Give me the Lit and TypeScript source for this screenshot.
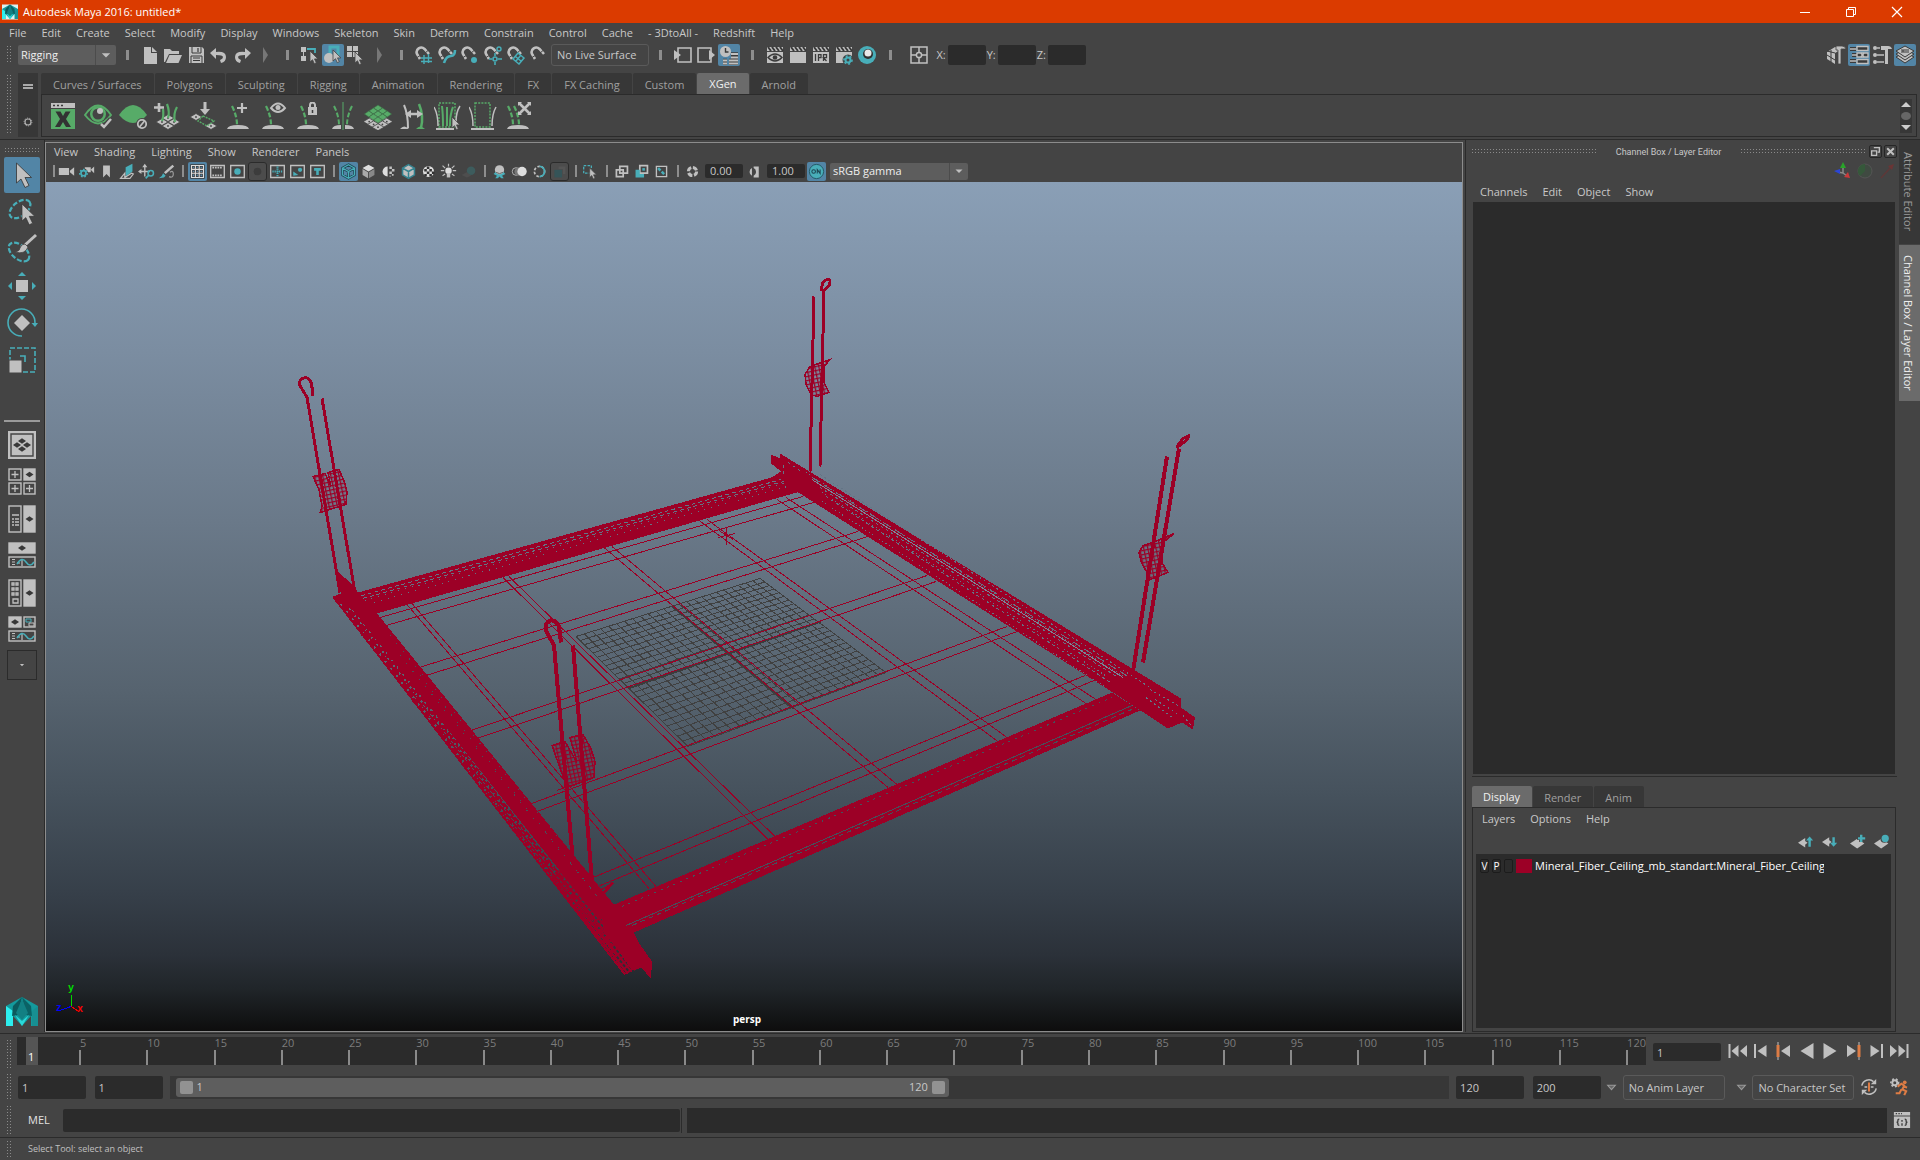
import { LitElement, html, svg, css } from "lit";
import { customElement, property, state } from "lit/decorators.js";
import { classMap } from "lit/directives/class-map.js";

const G = "#c0c0c0";
const D = "#3a3a3a";
const T = "#48aeb9";
const N = "#57ab68";
const O = "#dd7c45";
const RED = "#9c0026";

const clap = svg`<path d="M2 2h16v4H2z" fill="${G}"/><path d="M3 2l3 4M7 2l3 4M11 2l3 4M15 2l3 4" stroke="${D}" stroke-width="2"/><path d="M2 7h16v11H2z" fill="${G}"/>`;
const magnet = svg`<path d="M6 14L3 9A4.600 4.600 0 0 1 10.500 4L15 9" fill="none" stroke="${G}" stroke-width="2.600"/><path d="M3 12.500l4-2.500M10.500 8.500L14 5.500" stroke="#444" stroke-width="1"/>`;
const cursor = (x: number, y: number) =>
  svg`<path transform="translate(${x} ${y})" d="M0 0v11l2.500-2.300 1.800 4 2-1-1.800-3.800H8z" fill="${G}" stroke="#444" stroke-width=".8"/>`;
const frame = svg`<path d="M2 3h16v14H2z" fill="none" stroke="${G}" stroke-width="1.600"/>`;
const clump = (x: number) =>
  svg`<path d="M${x} 4q5 10 5 19" fill="none" stroke="${N}" stroke-width="2.200" stroke-dasharray="5 2"/>`;
const mound = svg`<path d="M3 27q1-4 11-4t11 4z" fill="${G}"/>`;
const gear = (x: number, y: number, r: number, c: string) =>
  svg`<circle cx=${x} cy=${y} r=${r} fill="none" stroke=${c} stroke-width="2"/><circle cx=${x} cy=${y} r=${r + 1.5} fill="none" stroke=${c} stroke-width="1.600" stroke-dasharray="2 2"/>`;
const tile = (x: number, y: number, c: string) =>
  svg`<path d="M${x} ${y - 3.5}l6 3.500-6 3.500-6-3.500z" fill=${c} stroke="#444" stroke-width=".8"/><circle cx=${x} cy=${y} r=".9" fill="#444"/>`;

const ICONS: Record<string, unknown> = {
  file: svg`<path d="M4 2h7v6h6v11H4z" fill="${G}"/><path d="M12 2l5 5h-5z" fill="${G}"/>`,
  open: svg`<path d="M1 17V4h6l2 2h7v3H6L2 17z" fill="${G}"/><path d="M6.500 10H19l-3.500 8H3z" fill="${G}"/>`,
  save: svg`<path d="M3 2h13l2 2v14H3z" fill="${G}"/><path d="M6 2v6h9V2M5 18v-7h11v7" fill="none" stroke="${D}"/><path d="M7 13h7M7 15.500h7M12 3v4" stroke="${D}" stroke-width="1.200"/>`,
  undo: svg`<path d="M1 8l6-5v4q10-1 10 5 0 5-5 6l-1-3q3-1 3-3 0-2-7-2v4z" fill="${G}"/>`,
  redo: svg`<path d="M19 8l-6-5v4Q3 6 3 12q0 5 5 6l1-3q-3-1-3-3 0-2 7-2v4z" fill="${G}"/>`,
  selHier: svg`<path d="M1 2h5v5H1zM1 11h5v5H1z" fill="${G}"/><path d="M3.500 7v4" stroke="${G}"/><path d="M7 4h8v4" fill="none" stroke="${T}" stroke-width="1.800"/>${cursor(10, 6)}`,
  selObj: svg`<path d="M7 2h8v9H7z" fill="none" stroke="${T}" stroke-width="3"/><circle cx="6" cy="13" r="5" fill="${G}"/>${cursor(10, 5)}`,
  selComp: svg`<path d="M1 1h5v5H1zM7 1h5v5H7zM1 7h5v5H1zM7 7h5v5H7z" fill="${G}"/>${cursor(9, 7)}`,
  magGrid: svg`${magnet}<path d="M10 10v9M14.500 9v9M7 13h11M7 16.500h11" stroke="${T}" stroke-width="1.400"/>`,
  magCurve: svg`${magnet}<path d="M7 18q2-7 7-7 4 0 4-6" fill="none" stroke="${T}" stroke-width="2.600"/>`,
  magPoint: svg`${magnet}<circle cx="14" cy="15" r="3" fill="${T}"/>`,
  magCenter: svg`${magnet}<circle cx="16" cy="4" r="2" fill="none" stroke="${T}" stroke-width="1.400"/><circle cx="12" cy="14" r="2" fill="none" stroke="${T}" stroke-width="1.600"/><path d="M12 8v3M12 17v3M6 14h3M15 14h4" stroke="${T}" stroke-width="1.600"/>`,
  magPlane: svg`${magnet}<path d="M12 8l6 5-5 6-6-5zM9.500 11.500l6 5M15 10l-5 6" fill="none" stroke="${T}" stroke-width="1.500"/>`,
  magLive: magnet,
  inBox: svg`<path d="M5 3h13v14H5z" fill="none" stroke="${G}" stroke-width="1.600"/><path d="M1 5l7 5-7 5z" fill="${G}"/>`,
  outBox: svg`<path d="M2 3h13v14H2z" fill="none" stroke="${G}" stroke-width="1.600"/><path d="M13 5l6 5-6 5z" fill="${G}"/>`,
  history: svg`<circle cx="6.500" cy="6.500" r="5.500" fill="${G}"/><path d="M6.500 3v4h3" fill="none" stroke="${D}" stroke-width="1.400"/><path d="M12 9h7M12 12.500h7M4 15.500h4M4 18.500h4M10 15.500h9M10 18.500h9" stroke="${D}" stroke-width="3.400"/><path d="M12 9h7M12 12.500h7M4 15.500h4M4 18.500h4M10 15.500h9M10 18.500h9" stroke="${G}" stroke-width="1.800"/>`,
  rendView: svg`${clap}<path d="M3 12.500q7-7 14 0-7 7-14 0z" fill="none" stroke="${D}" stroke-width="1.400"/><circle cx="10" cy="12.500" r="2.300" fill="${D}"/>`,
  rend: clap,
  ipr: svg`${clap}<path d="M4.500 9v7M7.500 16V9.700h2.500v3H7.500M12.500 16V9.700h3v3h-3l3 3.300" fill="none" stroke="${D}" stroke-width="1.300"/>`,
  rendSet: svg`${clap}<circle cx="14" cy="15" r="5.500" fill="#444"/>${gear(14, 15, 2.5, T)}`,
  hyper: svg`<circle cx="10" cy="10" r="9" fill="${T}"/><circle cx="11" cy="9" r="5" fill="#303030"/><circle cx="11" cy="8" r="3.500" fill="#e8e8e8"/>`,
  target: svg`<path d="M2 2h16v16H2zM10 2v5M10 13v5M2 10h5M13 10h5" fill="none" stroke="${G}" stroke-width="1.500"/><circle cx="10" cy="10" r="2.600" fill="none" stroke="${G}" stroke-width="1.500"/>`,
  modelKit: svg`<path d="M1 7l8-5 7 2-7 4v11l-8-5z" fill="${G}"/><path d="M1 10l8 5M5 5v12M9 8l-8-2" stroke="${D}"/><path d="M10 1h6q3 0 4 3h-5v15h-3V5h-2z" fill="${G}" stroke="#444" stroke-width=".8"/>`,
  attr: svg`<path d="M1 4h6M3 10h5M1 16h6" stroke="${D}" stroke-width="4"/><path d="M1 4h6M3 10h5M1 16h6" stroke="${G}" stroke-width="1.600"/><path d="M8 1.500h11v4H8zM8 8h11v4H8zM8 14.500h11v4H8z" fill="${D}" stroke="${G}" stroke-width="1.400"/><path d="M12 8l3 4M15 8l-3 4" stroke="${G}" stroke-width="1.500"/>`,
  toolSet: svg`<circle cx="3" cy="3" r="2" fill="${G}"/><circle cx="3" cy="10" r="2" fill="${G}"/><circle cx="3" cy="17" r="2" fill="${G}"/><path d="M5 3h3M5 10h7M5 17h7" stroke="${G}" stroke-width="1.600"/><path d="M9 1h7q3 0 4 3h-4v15h-3V5H9z" fill="${G}"/>`,
  layers: svg`<path d="M10 7l9 5-9 6-9-6z" fill="${G}" stroke="${D}"/><path d="M10 4l9 5-9 6-9-6z" fill="${G}" stroke="${D}"/><path d="M10 1l9 5-9 6-9-6z" fill="${G}" stroke="${D}"/><path d="M6 5h8M6 7h8M8 5v2" stroke="${D}"/>`,
  camera: svg`<path d="M1 6h12v8H1zM14 9l5-4v10l-5-4z" fill="${G}"/>`,
  camGear: svg`<path d="M8 5h7v6H8zM15 8l4-4v8z" fill="${G}"/><circle cx="6.500" cy="12" r="5.500" fill="#444"/>${gear(6.5, 12, 3, T)}`,
  bookmark: svg`<path d="M6 3h8v14l-4-4-4 4z" fill="${G}"/>`,
  imagePlane: svg`<path d="M9 5l8-4v9l-8 6z" fill="${T}"/><path d="M3 18l5-6v5l8-5 2 1-4 5z" fill="none" stroke="${G}" stroke-width="1.400"/>`,
  panZoom: svg`<path d="M8 3v13M2 10h12" stroke="${G}" stroke-width="1.600"/><path d="M5 5l3-4 3 4zM4 7L0 10l4 3z" fill="${G}"/><circle cx="15" cy="12" r="3.200" fill="none" stroke="${T}" stroke-width="1.800"/><path d="M13 14l-4 4" stroke="${T}" stroke-width="2"/>`,
  pencil: svg`<path d="M17 2L7 11l2 2 10-9z" fill="${G}"/><path d="M6 12l3 3-2 2-6 1q4-2 5-6z" fill="${T}"/><path d="M13 16q5 2 5-3t-4-2" fill="none" stroke="${G}" stroke-width="1.400" stroke-opacity=".7"/>`,
  grid: svg`<path d="M3 3h14v14H3zM3 7.500h14M3 12h14M7.500 3v14M12 3v14" fill="none" stroke="${D}" stroke-width="3"/><path d="M3 3h14v14H3zM3 7.500h14M3 12h14M7.500 3v14M12 3v14" fill="none" stroke="#ddd" stroke-width="1.300"/>`,
  film: svg`${frame}<path d="M4 5.500h12M4 14.500h12" stroke="${G}" stroke-width="2" stroke-dasharray="2 1"/>`,
  resGate: svg`${frame}<circle cx="10" cy="10" r="3.800" fill="${T}"/>`,
  gateMask: svg`<circle cx="10" cy="10" r="4.500" fill="#3c3c3c"/>`,
  fieldChart: svg`${frame}<path d="M10 4v12M4 10h12" stroke="${T}" stroke-width="2.400" stroke-dasharray="1.500 1"/>`,
  safeAction: svg`${frame}<circle cx="13" cy="8" r="2.500" fill="${T}"/><path d="M5 10l6 4-6 1z" fill="${T}"/>`,
  safeTitle: svg`${frame}<path d="M6 6h8v3h-2.500v5h-3V9H6z" fill="${T}"/>`,
  cubeWire: svg`<path d="M10 2l7 4v8l-7 4-7-4V6z M3 6l7 4 7-4M10 10v8" fill="none" stroke="#1d4450" stroke-width="3"/><path d="M10 2l7 4v8l-7 4-7-4V6z M3 6l7 4 7-4M10 10v8" fill="none" stroke="${T}" stroke-width="1.400"/>`,
  cube: svg`<path d="M10 2l7 4-7 4-7-4z" fill="#ddd"/><path d="M3 7l6.500 4v7L3 14z" fill="#aaa"/><path d="M17 7l-6.500 4v7L17 14z" fill="#888"/>`,
  halfBall: svg`<path d="M9 4v12a6 6 0 0 1 0-12z" fill="#ddd"/><path d="M11 4h3v3h-3zM14 7h3v3h-3zM11 10h3v3h-3zM14 13h2v2h-2zM11 15h2v1h-2z" fill="${G}"/>`,
  cubeTex: svg`<path d="M10 2l7 4v8l-7 4-7-4V6z" fill="${G}"/><path d="M10 2l7 4v8l-7 4-7-4V6z M3 6l7 4 7-4M10 10v8" fill="none" stroke="#358390" stroke-width="1.800"/>`,
  checker: svg`<circle cx="10" cy="10" r="6.500" fill="#ddd"/><path d="M8 4h3v3H8zM5 7h3v3H5zM11 7h3v3h-3zM8 10h3v3H8zM14 10h3v3h-3zM5 13h3v3H5zM11 13h3v3h-3z" fill="#333"/>`,
  bulb: svg`<circle cx="10" cy="9" r="3.800" fill="#ddd"/><path d="M8 12h4v5H8z" fill="${G}"/><path d="M10 1v3M1 9h4M15 9h4M3 3l3 3M17 3l-3 3M3 15l3-2M17 15l-3-2" stroke="${G}" stroke-width="1.400"/>`,
  shadow: svg`<circle cx="13" cy="9" r="5" fill="#3d5c5d"/><path d="M2 14l6-3 5 4-5 2z" fill="#4e4e4e"/>`,
  occl: svg`<path d="M3 13l3-3 4 3 4-3 3 3-4 2 2 3h-3l-2-2-2 2H5l2-3z" fill="${T}"/><circle cx="10" cy="8" r="5.500" fill="${G}"/><path d="M6 11q4 3 8 0" stroke="#555" fill="none"/>`,
  blur: svg`<circle cx="6" cy="10" r="4.500" fill="none" stroke="${G}"/><circle cx="9" cy="10" r="5" fill="#777"/><circle cx="13" cy="10" r="5.500" fill="#ddd"/>`,
  aa: svg`<circle cx="10" cy="10" r="6" fill="none" stroke="${G}" stroke-width="2" stroke-dasharray="3 2"/><path d="M10 4a6 6 0 0 1 0 12" fill="none" stroke="${T}" stroke-width="2"/>`,
  dof: svg`<path d="M4 8h9v9H4z" fill="#355458"/><path d="M9 4h8v9h-3V7H9z" fill="#555"/>`,
  isolate: svg`<path d="M2 3h9v9H2z" fill="none" stroke="${T}" stroke-width="1.500" stroke-dasharray="3 1.500"/>${cursor(9, 6)}`,
  xray1: svg`<path d="M8 4h9v8H8z" fill="none" stroke="${G}" stroke-width="2"/><path d="M4 8h8v8H4z" fill="none" stroke="${G}" stroke-width="2"/>`,
  xray2: svg`<path d="M8 3h9v9H8z" fill="none" stroke="${G}" stroke-width="2"/><path d="M3 8h5v5h5v4H3z" fill="${T}"/><path d="M11 6h3v3h-3z" fill="${T}"/>`,
  xray3: svg`<path d="M4 4h12v12H4z" fill="none" stroke="${G}" stroke-width="1.600"/><path d="M6 6l8 8" stroke="${T}" stroke-width="3" stroke-dasharray="4 2"/>`,
  aperture: svg`<circle cx="10" cy="10" r="4.800" fill="none" stroke="${G}" stroke-width="3.600" stroke-dasharray="5.500 2"/>`,
  gamma: svg`<path d="M7 6a5 5 0 0 0 0 9zM9 4h6v13H9v-2a5 5 0 0 0 0-9z" fill="${G}"/>`,
  on: svg`<circle cx="10" cy="10" r="7.500" fill="${T}" stroke="#225763"/><circle cx="7" cy="10" r="1.900" fill="none" stroke="#1d4450" stroke-width="1.100"/><path d="M10.800 12.200V8l3 4V8" fill="none" stroke="#1d4450" stroke-width="1.100"/>`,
  first: svg`<path d="M1.500 3v14" stroke="${G}" stroke-width="2"/><path d="M10.500 4v12L3.500 10zM19 4v12l-7-6z" fill="${G}"/>`,
  back: svg`<path d="M4 3v14" stroke="${G}" stroke-width="2"/><path d="M15.500 4v12l-9-6z" fill="${G}"/>`,
  prevKey: svg`<path d="M4 1v18" stroke="${G}"/><path d="M4 4v12" stroke="${O}" stroke-width="3"/><path d="M16 4v12l-9-6z" fill="${G}"/>`,
  playB: svg`<path d="M16.500 2v16l-13-8z" fill="${G}"/>`,
  play: svg`<path d="M3.500 2v16l13-8z" fill="${G}"/>`,
  nextKey: svg`<path d="M16 1v18" stroke="${G}"/><path d="M16 4v12" stroke="${O}" stroke-width="3"/><path d="M4 4v12l9-6z" fill="${G}"/>`,
  fwd: svg`<path d="M16 3v14" stroke="${G}" stroke-width="2"/><path d="M4.500 4v12l9-6z" fill="${G}"/>`,
  last: svg`<path d="M18.500 3v14" stroke="${G}" stroke-width="2"/><path d="M9.500 4v12l7-6zM1 4v12l7-6z" fill="${G}"/>`,
  autoKey: svg`<path d="M2 8.500A8 8 0 0 1 15 4M18 11.500A8 8 0 0 1 5 16" fill="none" stroke="${G}" stroke-width="1.700"/><path d="M18 1v6h-6zM2 19v-6h6z" fill="${G}"/><path d="M10 5v10" stroke="${O}" stroke-width="2.200"/><path d="M5 10h3M12 10h3" stroke="${G}" stroke-width="1.400"/>`,
  prefs: svg`${gear(5, 5, 2.6, G)}<circle cx="15.500" cy="4.500" r="2" fill="${O}"/><path d="M8 9l4-3 3 2-2 4 4 2-2 4M12 12l-2 4H6M14 9l4 1" fill="none" stroke="${O}" stroke-width="2.200"/>`,
  script: svg`<path d="M1 1h18v4H1zM1 6h18v13H1z" fill="${G}"/><path d="M3 3h1.500M6 3h1.500M9 3h1" stroke="${D}" stroke-width="1.400"/><path d="M7 9q-2 0-1.500 2 0 1.500-1.500 1.500 1.500 0 1.500 1.500Q5 16 7 16M13 9q2 0 1.500 2 0 1.500 1.500 1.500-1.500 0-1.500 1.500.500 2-1.500 2M10 10v2M10 13.500v3" fill="none" stroke="${D}" stroke-width="1.500"/>`,
  layUp: svg`<path d="M0 11l9-6v12zM8 8l4 3-4 3z" fill="${G}"/><path d="M10 8l4.500-5L19 8h-3v8h-3V8z" fill="${T}"/>`,
  layDown: svg`<path d="M0 10l9-6v12zM8 7l4 3-4 3z" fill="${G}"/><path d="M10 11l4.500 5 4.500-5h-3V4h-3v7z" fill="${T}"/>`,
  layAdd: svg`<path d="M0 12l9-6 9 6-9 6z" fill="${G}"/><path d="M14 1v9M9 5h10" stroke="#444" stroke-width="5"/><path d="M14 1v9M10 5.500h9" stroke="${T}" stroke-width="3"/>`,
  layNew: svg`<path d="M0 12l9-6 9 6-9 6z" fill="${G}"/><circle cx="13" cy="6" r="5" fill="#444"/><circle cx="14" cy="5.500" r="4.500" fill="${T}"/>`,
  axes: svg`<path d="M10 12V6M10 12l-5-1M10 12l4 3" stroke="#888" stroke-width="1.500"/><path d="M10 1l3 6H7z" fill="#29a329"/><path d="M1 10l6-2v5z" fill="#2b46d6"/><path d="M17 17l-6-1 4-5z" fill="#c93a3a"/>`,
  ball: svg`<circle cx="10" cy="10" r="7" fill="#3f4a41" stroke="#555"/><path d="M10 10V3a7 7 0 0 0-5 12z" fill="#35583a"/>`,
  arrowRed: svg`<path d="M4 17L15 5" stroke="#5e3838" stroke-width="1.500"/><path d="M17 3l-2 6-4-4z" fill="#6a3535"/>`,
  dock: svg`<path d="M7 3h10v8h-3M3 9h9v8H3z" fill="none" stroke="${G}" stroke-width="2.400"/>`,
  close: svg`<path d="M4 4l12 12M16 4L4 16" stroke="${G}" stroke-width="3.600"/>`,
  min: svg`<path d="M5 10.500h10" stroke="#fff" stroke-width="1"/>`,
  restore: svg`<path d="M5.500 7.500h7v7h-7zM7.500 7V5.500h7v7H13" fill="none" stroke="#fff"/>`,
  shut: svg`<path d="M5 5l10 10M15 5L5 15" stroke="#fff" stroke-width="1.200"/>`,
  tri: svg`<path d="M3 7h14l-7 7z" fill="${G}"/>`,
  triDark: svg`<path d="M3 6h14l-7 8z" fill="#666" stroke="#999" stroke-width="2"/>`,
  gearS: gear(10, 10, 5, "#b0b0b0"),
};

const BIG: Record<string, unknown> = {
  xgen: svg`<path d="M2 1h24v5H2z" fill="${G}"/><path d="M4 3.500h2M8 3.500h2M12 3.500h2" stroke="${D}" stroke-width="1.500"/><path d="M2 7h24v20H2z" fill="${N}"/><path d="M6.500 9.500h5l2.500 4.500 2.500-4.500h5L17 17l5 8h-5l-3-5-3 5H6l5-8z" fill="#333"/>`,
  eyeOk: svg`<path d="M1 13Q14-6 27 13 14 30 1 13z" fill="none" stroke="${N}" stroke-width="2"/><circle cx="14" cy="12" r="8" fill="${N}"/><circle cx="14" cy="12" r="5.500" fill="#444"/><circle cx="16" cy="9" r="3" fill="${G}"/><path d="M17 22l3 3 7-8" fill="none" stroke="#444" stroke-width="5"/><path d="M17 22l3 3 7-8" fill="none" stroke="${G}" stroke-width="2.500"/>`,
  leaf: svg`<path d="M0 13Q14-7 28 13 14 29 0 13z" fill="${N}"/><circle cx="23" cy="22" r="6" fill="#444"/><circle cx="23" cy="22" r="4.200" fill="none" stroke="${G}" stroke-width="1.800"/><path d="M20.500 25l5-6" stroke="${G}" stroke-width="1.800"/>`,
  addDesc: svg`${tile(8, 20, G)}${tile(20, 20, G)}${tile(14, 16, G)}${tile(14, 24, G)}<path d="M8 19q2-5 1-12M14 16q2-6-1-14M21 20q-2-8 2-15" fill="none" stroke="${N}" stroke-width="2.200"/><path d="M5 1v9M0 5.500h10" stroke="${G}" stroke-width="2.600"/>`,
  importD: svg`${tile(7, 15, G)}${tile(22, 24, G)}<path d="M14 14l11 5-7 5-9-5z" fill="none" stroke="${N}" stroke-width="1.400" stroke-dasharray="2 1"/><path d="M16 0v9" stroke="${G}" stroke-width="3"/><path d="M11 7h10l-5 6z" fill="${G}"/>`,
  guideAdd: svg`${mound}${clump(8)}<path d="M18 1v10M13 6h10" stroke="${G}" stroke-width="2.200"/>`,
  guideEye: svg`${mound}${clump(7)}<path d="M12 6q7-9 14 0-7 8-14 0z" fill="none" stroke="${G}" stroke-width="2"/><circle cx="19" cy="5.500" r="2.500" fill="${G}"/>`,
  guideLock: svg`${mound}${clump(7)}<path d="M14 5h9v8h-9z" fill="${G}"/><path d="M16 5V3a2.500 2.500 0 0 1 5 0v2" fill="none" stroke="${G}" stroke-width="2"/><path d="M18.500 8v3" stroke="${D}" stroke-width="1.500"/>`,
  mirror: svg`<path d="M3 27q1-4 9-4v4zM25 27q-1-4-9-4v4z" fill="${G}"/><path d="M14 0v28" stroke="${N}"/><path d="M5 4q5 10 5 19M23 4q-5 10-5 19" fill="none" stroke="${N}" stroke-width="2" stroke-dasharray="5 2"/>`,
  patches: svg`<g>${[0, 1, 2].map((r) => [0, 1, 2].map((c) => tile(14 + (c - r) * 4.4, 14 + (c + r) * 2.8, G)))}</g><g>${[0, 1, 2].map((r) => [0, 1, 2].map((c) => svg`<path d="M${14 + (c - r) * 4.6} ${3 + (c + r) * 3}l4.400 3-4.400 3-4.400-3z" fill="${N}" stroke="#3c6b46" stroke-width=".6"/>`))}</g>`,
  length: svg`<path d="M1 27q4-5 9 0z" fill="${G}"/><path d="M9 26q0-14-4-23" fill="none" stroke="${G}" stroke-width="2"/><path d="M22 26q3-12-2-24" fill="none" stroke="${N}" stroke-width="2.500"/><path d="M9 12h11" stroke="${G}" stroke-width="2.500"/><path d="M12 8v8l-6-4zM18 8v8l6-4z" fill="${G}"/><path d="M17 27q4-5 9 0z" fill="${N}"/>`,
  selGuides: svg`<path d="M5 1h16v24H5z" fill="none" stroke="${N}" stroke-width="1.500" stroke-dasharray="2 1.200"/><path d="M9 24Q9 12 8 4M13 24q0-12 0-19M16 24q0-12 3-19" fill="none" stroke="${N}" stroke-width="2"/><path d="M4 24Q4 12 0 5M22 20q0-10 4-16" fill="none" stroke="${G}" stroke-width="1.500"/><path d="M2 27h18" stroke="${G}" stroke-width="2"/>${cursor(18, 15)}`,
  frameG: svg`<path d="M6 1h15v24H6z" fill="none" stroke="${N}" stroke-width="1.500" stroke-dasharray="2 1.200"/><path d="M4 24Q4 12 0 5M23 24q0-12 4-19" fill="none" stroke="${G}" stroke-width="1.500"/><path d="M2 27h23" stroke="${G}" stroke-width="2"/>`,
  guideDel: svg`${mound}${clump(4)}${clump(10)}<path d="M15 1l11 11M26 1L15 12" stroke="${G}" stroke-width="2.600"/><path d="M14 0h4l-4 4zM27 0v4l-4-4zM14 13v-4l4 4zM27 13h-4l4-4z" fill="${G}"/>`,
};

const bigCursor = (x: number, y: number, s: number) =>
  svg`<path transform="translate(${x} ${y}) scale(${s})" d="M0 0v20l4.500-4 4 8.500 4-2-4-8H15z" fill="${G}" stroke="#333" stroke-width=".8"/>`;
const diamond = (x: number, y: number, w = 4) =>
  svg`<path d="M${x - w} ${y}l${w}-${w * 0.7} ${w} ${w * 0.7}-${w} ${w * 0.7}z" fill="#383838"/>`;
const box = (x: number, y: number, w: number, h: number, f = "none") =>
  svg`<rect x=${x} y=${y} width=${w} height=${h} fill=${f} stroke="${G}" stroke-width="1.400"/>`;
const wave = (y: number) =>
  svg`${box(5, y, 26, 10)}<path d="M8 ${y + 2.5}h3M8 ${y + 5}h3M8 ${y + 7.5}h3M18 ${y + 2}v7M13 ${y + 6}h3" stroke="${G}" stroke-width="1.200"/><path d="M13 ${y + 7}q5-8 9-2t8 0" fill="none" stroke="${T}" stroke-width="1.500"/>`;

const TOOLS: Record<string, unknown> = {
  select: bigCursor(12.5, 6, 1),
  lasso: svg`<ellipse cx="16" cy="15" rx="12" ry="7" transform="rotate(-38 16 15)" fill="none" stroke="${T}" stroke-width="2.200" stroke-dasharray="5 2"/>${bigCursor(18, 10, 0.85)}`,
  paint: svg`<ellipse cx="15" cy="21" rx="12" ry="7" transform="rotate(40 15 21)" fill="none" stroke="${T}" stroke-width="2.200" stroke-dasharray="5 2"/><path d="M32 4L21 14" stroke="${G}" stroke-width="3"/><path d="M21 13l3 3q-3 8-13 5 5-1 5-4 1-4 5-4z" fill="${G}" stroke="#444" stroke-width=".8"/>`,
  move: svg`<path d="M12 12h12v12H12z" fill="${G}"/><path d="M18 4l4 4h-8zM18 32l4-4h-8zM4 18l4-4v8zM32 18l-4-4v8z" fill="${T}"/>`,
  rotate: svg`<path d="M31 18A13.500 13.500 0 1 0 18 31" fill="none" stroke="${T}" stroke-width="1.600"/><path d="M27.500 18h6.500l-3 4z" fill="${T}"/><path d="M18 10l8 8-8 8-8-8z" fill="${G}"/>`,
  scale: svg`<path d="M6 6h25v24H6z" fill="none" stroke="${T}" stroke-width="1.600" stroke-dasharray="5 2"/><path d="M5 18h13v13H5z" fill="${G}" stroke="#444"/><path d="M16 14h5v6" fill="none" stroke="${T}" stroke-width="1.600"/>`,
  single: svg`<path d="M4 4h28v28H4z" fill="${G}"/><path d="M7 7h22v22H7z" fill="none" stroke="#444" stroke-width="1.400"/>${diamond(18, 14)}${diamond(13, 18)}${diamond(23, 18)}${diamond(18, 22)}`,
  four: svg`${box(5, 5, 12, 11)}${box(20, 5, 11, 11, G)}${box(5, 19, 12, 11)}${box(20, 19, 11, 11)}<path d="M11 7v7M7.500 10.500h7M11 21v7M7.500 24.500h7M25.500 21v7M22 24.500h7" stroke="${G}" stroke-width="1.300"/>${diamond(25.5, 10.5)}`,
  outliner: svg`${box(5, 5, 12, 26)}${box(20, 5, 11, 26, G)}<path d="M8 14h7M8 18h2M8 21h2M8 24h2M11 18h4M11 21h4M11 24h4" stroke="${G}" stroke-width="1.300"/>${diamond(25.5, 18)}`,
  graph: svg`${box(5, 5, 26, 10, G)}${diamond(18, 10)}${wave(19)}`,
  hyperg: svg`${box(5, 5, 12, 26)}${box(20, 5, 11, 26, G)}<path d="M8 8h2v2H8zM12 8h2v2h-2zM8 13h2v2H8zM12 13h2v2h-2zM8 18h2v2H8zM12 18h2v2h-2zM9 24h5v4H9z" fill="none" stroke="${G}" stroke-width="1.300"/>${diamond(25.5, 18)}`,
  combo: svg`${box(5, 5, 12, 10, G)}${box(20, 5, 11, 10)}${diamond(11, 10)}<path d="M22 7h5v3h-5z" fill="none" stroke="${T}"/><path d="M25 11h5v3h-5z" fill="none" stroke="${G}"/>${wave(19)}`,
};

type Pt = [number, number];

/** Maps the unit square onto a screen quad with a projective transform. */
function projector(a: Pt, b: Pt, c: Pt, d: Pt) {
  const dx1 = b[0] - c[0], dx2 = d[0] - c[0], dx3 = a[0] - b[0] + c[0] - d[0];
  const dy1 = b[1] - c[1], dy2 = d[1] - c[1], dy3 = a[1] - b[1] + c[1] - d[1];
  const den = dx1 * dy2 - dx2 * dy1;
  const g = (dx3 * dy2 - dx2 * dy3) / den;
  const h = (dx1 * dy3 - dx3 * dy1) / den;
  return (u: number, v: number): string => {
    const w = g * u + h * v + 1;
    const x = ((b[0] - a[0] + g * b[0]) * u + (d[0] - a[0] + h * d[0]) * v + a[0]) / w;
    const y = ((b[1] - a[1] + g * b[1]) * u + (d[1] - a[1] + h * d[1]) * v + a[1]) / w;
    return `${x.toFixed(1)} ${y.toFixed(1)}`;
  };
}

function gridPath(): string {
  const p = projector([576, 637], [760, 579], [886, 673], [688, 747]);
  let out = "";
  for (let i = 0; i <= 24; i++) {
    out += `M${p(i / 24, 0)}L${p(i / 24, 1)}M${p(0, i / 24)}L${p(1, i / 24)}`;
  }
  return out;
}

/** Parallel strands between two cross-sections of a beam. */
function strands(a: Pt, b: Pt, c: Pt, d: Pt, ts: number[]): string {
  return ts
    .map((t) => `M${a[0] + (b[0] - a[0]) * t} ${a[1] + (b[1] - a[1]) * t}L${c[0] + (d[0] - c[0]) * t} ${c[1] + (d[1] - c[1]) * t}`)
    .join("");
}

const SEAMS =
  "M407 605L649 889M412 604L656 887M503 578L768 840M509 577L775 837M604 548L888 788M612 547L897 785M699 521L998 742M707 520L1007 738M777 500L1086 704M786 498L1096 700" +
  "M380 618L803 497M386 626L817 502M419 668L858 532M426 676L868 537M471 731L927 576M477 739L936 582M529 805L1007 627M537 812L1017 632M593 878L1085 676M598 887L1094 681";

const CLIPS = [
  "M313 477L325 474 331 487 328 473 339 470 345 484 347 493 346 505 333 509 320 513 322 507 319 490z",
  "M552 746L565 742 577 763 570 738 583 735 591 749 595 762 594 778 567 788 562 774z",
  "M805 375L810 367 830 360 824 367 824 383 829 393 817 397 811 395 806 385z",
  "M1139 553L1143 546 1153 543 1174 534 1163 543 1162 563 1168 573 1148 581 1147 573 1141 562z",
];

@customElement("maya-icon")
export class MayaIcon extends LitElement {
  @property() name = "";
  @property({ type: Number }) size = 20;
  static styles = css`
    :host { display: block; line-height: 0; flex: none; }
  `;
  render() {
    const box = this.name in BIG ? 28 : this.name in TOOLS ? 36 : 20;
    const body = ICONS[this.name] ?? BIG[this.name] ?? TOOLS[this.name];
    return html`<svg width=${this.size} height=${this.size} viewBox="0 0 ${box} ${box}" aria-hidden="true">${body}</svg>`;
  }
}

@customElement("maya-scene")
export class MayaScene extends LitElement {
  static styles = css`
    :host { display: block; flex: 1; min-height: 0; }
    .scene { display: block; width: 100%; height: 100%; }
    .persp { font: bold 10px "Open Sans", "DejaVu Sans", sans-serif; fill: #fff; }
    .axis { font: bold 10px "Liberation Mono", monospace; }
  `;
  render() {
    const hole = "#647485";
    return html`<svg class="scene" viewBox="46 182 1416 850" preserveAspectRatio="xMidYMid slice" role="img" aria-label="persp">
      <defs>
        <linearGradient id="sky" x1="0" y1="0" x2="0" y2="1">
          <stop offset="0" stop-color="#8a9fb6" /><stop offset=".2" stop-color="#7b8da1" />
          <stop offset=".4" stop-color="#6a7989" /><stop offset=".6" stop-color="#56636f" />
          <stop offset=".72" stop-color="#46525d" /><stop offset=".84" stop-color="#363f49" />
          <stop offset=".91" stop-color="#2b3139" /><stop offset=".95" stop-color="#202529" />
          <stop offset="1" stop-color="#0d0d0d" />
        </linearGradient>
        <pattern id="mesh" width="4" height="4" patternUnits="userSpaceOnUse" patternTransform="rotate(-12)">
          <path d="M0 .5h4M.5 0v4" stroke="${RED}" stroke-width="1.500" />
        </pattern>
        <pattern id="mesh2" width="5" height="4" patternUnits="userSpaceOnUse" patternTransform="rotate(51)">
          <path d="M0 1h5M1 0v4" stroke="${RED}" stroke-width="2" />
        </pattern>
      </defs>
      <rect x="46" y="182" width="1416" height="850" fill="url(#sky)" />
      <g fill="none" shape-rendering="crispEdges">
        <path d=${gridPath()} stroke="#404040" />
        <path d="M672 606L794 709M628 689L821 622" stroke="#3c3c3c" stroke-width="2" />
        <path d=${SEAMS} stroke="${RED}" />
        <path d="M726 527v18M718 538l17-4M719 531l14 9" stroke="${RED}" />

        <g fill="${RED}">
          <path d="M337 571L352 585 358 593 775 477 800 492 377 614 613 904 600 922 354 612 333 597 341 594z" />
          <path d="M780 454L1181 699 1181 708 1195 718 1193 730 1182 723 1168 729 1113 693 800 494 773 477 781 472 771 464 771 455 780 459z" />
          <path d="M612 906L1112 693 1140 711 634 933z" />
          <path d="M598 900L613 904 630 925 638 942 652 962 651 979 641 968 632 971 604 930z" />
        </g>
        <path d="M560 870L604 924 641 968 626 975 548 876z" fill="url(#mesh2)" />
        <path d=${strands([333, 597], [350, 606], [625, 975], [608, 935], [0, 0.45])} stroke="${RED}" stroke-width="2" />
        <path d=${strands([333, 597], [350, 606], [625, 975], [608, 935], [0.22, 0.7, 0.9])} stroke="${RED}" stroke-width="2" stroke-dasharray="7 2" />
        <path d=${strands([333, 597], [350, 606], [625, 975], [608, 935], [0.3])} stroke="${RED}" stroke-width="8" stroke-dasharray="2 40" />

        <g stroke=${hole}>
          <path d=${strands([360, 595], [370, 608], [780, 479], [792, 489], [0.1, 0.3])} stroke-dasharray="4 3" />
          <path d=${strands([360, 595], [370, 608], [780, 479], [792, 489], [0.45, 0.75])} stroke-dasharray="1 6" />
          <path d="M812 480L1123 678" stroke="#7a8a9a" />
          <path d="M812 478L1128 677" stroke-dasharray="9 5" />
          <path d="M820 475L1150 688" stroke-dasharray="2 3" />
          <path d="M820 488L1118 678M826 497L1112 684" stroke-dasharray="3 3" />
          <path d="M822 493L1110 679M822 502L1106 688M806 473L1125 678" stroke-dasharray="1 3" />
          <path d="M1150 690l28 16M1146 698l26 20M1155 700l22 14M1183 716l8 10" stroke-dasharray="2 3" />
          <path d="M783 465v10M788 463l12 8" stroke-dasharray="3 3" />
        </g>
        <g stroke="#46515b">
          <path d="M626 926L1132 706" />
          <path d="M632 926L1134 709" stroke-dasharray="5 4" />
          <path d="M622 907L1112 698" stroke-dasharray="2 5" />
          <path d="M400 656L600 900M420 676L608 910M390 636L560 840" stroke-dasharray="1 9" />
        </g>

        <g stroke="${RED}" stroke-width="3">
          <path d="M312 396V388Q311 378 305 378 298 380 300 386L307 398 340 593M322 399L355 593" />
          <path d="M573 646L592 882M561 643L559 627Q556 620 550 621 543 625 547 633L554 646 573 862" stroke-width="4" />
          <path d="M820 467L824 291 829 286Q832 280 827 280 821 282 822 291M814 297L810 472" />
          <path d="M1143 663L1179 449M1167 457L1133 672" stroke-width="4" />
          <path d="M1177 447L1183 439 1189 436 1187 440 1180 446z" stroke-linejoin="round" />
          <path d="M613 883L602 895" />
        </g>
        <path d="M557 791L594 778M613 883l-13 8" stroke="${RED}" />
        ${CLIPS.map((d) => svg`<path d=${d} fill="url(#mesh)" stroke="${RED}" stroke-width="1.500"/>`)}
      </g>
      <g fill="none" shape-rendering="crispEdges">
        <path d="M71.500 1007V995" stroke="#00d800" /><path d="M71 1007l-11 4" stroke="#00f" /><path d="M71 1007l8 5" stroke="#e00" />
      </g>
      <text class="axis" x="68" y="991" fill="#0d0">y</text>
      <text class="axis" x="56" y="1011" fill="#00f">z</text>
      <text class="axis" x="77" y="1012" fill="#f00">x</text>
      <text class="persp" x="733" y="1023">persp</text>
    </svg>`;
  }
}

const MENUS = ["File", "Edit", "Create", "Select", "Modify", "Display", "Windows", "Skeleton", "Skin", "Deform", "Constrain", "Control", "Cache", "- 3DtoAll -", "Redshift", "Help"];
const SHELVES = ["Curves / Surfaces", "Polygons", "Sculpting", "Rigging", "Animation", "Rendering", "FX", "FX Caching", "Custom", "XGen", "Arnold"];
const PANEL_GROUPS = [
  ["camera", "camGear", "bookmark", "imagePlane", "panZoom", "pencil"],
  ["grid", "film", "resGate", "gateMask", "fieldChart", "safeAction", "safeTitle"],
  ["cubeWire", "cube", "halfBall", "cubeTex", "checker", "bulb", "shadow"],
  ["occl", "blur", "aa", "dof"],
  ["isolate"],
  ["xray1", "xray2", "xray3"],
];
const ACTIVE = new Set(["selObj", "history", "grid", "cubeWire", "on", "attr", "layers", "select"]);
const BOXED = new Set(["gateMask", "dof"]);

@customElement("app-root")
export class AppRoot extends LitElement {
  @state() private shelf = "XGen";
  @state() private layerTab = "Display";

  static styles = css`
    :host {
      display: grid;
      grid-template-rows: 23px 20px 24px 73px minmax(0, 1fr) 37px 32px 34px 23px;
      height: 100vh;
      min-width: 1280px;
      overflow: hidden;
      background: #444;
      color: #c8c8c8;
      font: 11px/16px "Open Sans", "Noto Sans", sans-serif;
    }
    * { box-sizing: border-box; }
    button, input, select, a { font: inherit; color: inherit; }
    button { border: 0; padding: 0; margin: 0; background: none; display: grid; place-items: center; flex: none; white-space: nowrap; }
    input { border: 0; padding: 0 4px; min-width: 0; background: #2b2b2b; border-radius: 2px; }
    .row { display: flex; align-items: center; min-width: 0; }
    .grow { flex: 1; min-width: 0; }
    .on { background: #5285a6; border-radius: 2px; }
    .boxed { border: 1px solid #2b2b2b; border-radius: 3px; background: #4c4c4c; }
    .title { background: #db3b00; color: #fff; padding: 0 0 0 2px; }
    .title .name { margin: 0 0 0 5px; flex: 1; font-weight: 400; font-size: 11px; }
    .logo { display: block; flex: none; }
    .win { width: 46px; height: 23px; }
    .menus { gap: 15px; }
    .main-menu { padding: 0 9px; }
    .vgrip { width: 5px; align-self: stretch; margin: 3px 6px 3px 7px; flex: none; }
    .hgrip { height: 5px; }
    .vgrip, .hgrip {
      background: repeating-linear-gradient(90deg, #8a8a8a 0 1px, transparent 1px 3px);
      mask: repeating-linear-gradient(#000 0 1px, transparent 1px 3px);
      -webkit-mask: repeating-linear-gradient(#000 0 1px, transparent 1px 3px);
    }
    .status .t { width: 22px; height: 22px; margin-right: 1px; }
    .sep { width: 23px; height: 20px; flex: none; display: grid; place-items: center; }
    .sep::before { content: ""; width: 3px; height: 10px; background: #8e8e8e; }
    .end { width: 22px; flex: none; display: grid; place-items: center; }
    .end::before { content: ""; border-left: 5px solid #777; border-top: 8px solid transparent; border-bottom: 8px solid transparent; }
    .combo { display: grid; background: #5d5d5d; border-radius: 2px; }
    .combo select { grid-area: 1 / 1; appearance: none; border: 0; background: none; padding: 0 3px; width: 100%; color: #eee; }
    .combo maya-icon { grid-area: 1 / 1; justify-self: end; align-self: stretch; padding: 0 4px; border-left: 1px solid #4c4c4c; pointer-events: none; display: grid; place-items: center; }
    .mode { width: 98px; height: 20px; }
    .outlined { border: 1px solid #5a5a5a; border-radius: 3px; height: 22px; padding: 0 5px; text-align: left; flex: none; display: block; line-height: 20px; overflow: hidden; }
    .live { width: 98px; }
    .coord { width: 38px; height: 20px; margin: 0 1px 0 2px; }
    .shelf { display: grid; grid-template: 24px 43px / 18px 20px 3px minmax(0, 1fr); padding: 3px 3px 0 0; border-bottom: 1px solid #2b2b2b; }
    .shelf .vgrip { grid-row: 1 / 3; margin: 5px 6px 2px 7px; }
    .shelf-side { grid-row: 1 / 3; grid-column: 2; margin: 3px 0 0 0; background: #373737; display: flex; flex-direction: column; justify-content: space-between; align-items: center; padding: 11px 0 9px; }
    .burger { width: 10px; height: 5px; border-top: 2px solid #aaa; border-bottom: 2px solid #aaa; }
    .tabs { display: flex; gap: 1px; align-items: flex-end; }
    .shelf .tabs { grid-column: 4; }
    .tab { background: #373737; color: #a0a0a0; height: 21px; padding: 2px 12px 0; border-radius: 2px 2px 0 0; }
    .tab.cur { background: #6b6b6b; color: #f0f0f0; padding-top: 0; }
    .shelf-body { grid-column: 4; border: 1px solid #2b2b2b; display: flex; align-items: center; padding: 0 4px 0 7px; }
    .shelf-body .s { width: 28px; height: 32px; margin-right: 7px; }
    .spin { margin-left: auto; width: 12px; height: 34px; background: #373737; display: flex; flex-direction: column; align-items: center; justify-content: space-between; padding: 3px 0; }
    .up, .down { width: 10px; border: 5px solid transparent; border-top-width: 0; border-bottom-color: #ccc; }
    .down { border-width: 5px; border-bottom-width: 0; border-color: #ccc transparent transparent; }
    .knob { width: 10px; height: 8px; border-radius: 50%; background: #666; }
    .work { display: grid; grid-template-columns: 45px minmax(0, 1fr) 436px 21px; min-height: 0; border-bottom: 1px solid #2b2b2b; padding-bottom: 1px; }
    .toolbox { display: flex; flex-direction: column; align-items: center; border-right: 1px solid #2b2b2b; padding: 8px 4px 5px; }
    .toolbox .hgrip { width: 34px; margin-bottom: 4px; }
    .toolbox .b { width: 36px; height: 36px; margin-bottom: 1px; }
    .rule { width: 36px; height: 2px; background: #9a9a9a; margin: 41px 0 5px; }
    .more { width: 30px; height: 30px; border: 1px solid #2b2b2b; margin-top: 1px; }
    .toolbox .logo { margin-top: auto; }
    .view { display: flex; flex-direction: column; border: 1px solid #8c8c8c; margin: 2px 0 0; min-width: 0; min-height: 0; background: #444; }
    .view .menus { padding: 0 8px; height: 18px; gap: 16px; }
    .ptools { height: 21px; flex: none; padding: 0 0 1px 5px; }
    .ptools .t { width: 19px; height: 19px; margin-right: 1px; }
    .ptools .sep { width: 11px; height: 18px; }
    .ptools .sep:first-child { width: 6px; }
    .ptools .sep::before { height: 12px; width: 2px; }
    .num { width: 38px; height: 14px; padding: 0 5px; margin: 0 2px; }
    .cm { width: 138px; height: 17px; margin-left: 3px; }
    .side { display: flex; flex-direction: column; margin-left: 2px; border-left: 1px solid #2b2b2b; padding: 4px 2px 0 6px; min-height: 0; }
    .dock { height: 15px; gap: 2px; }
    .dock .hgrip { flex: 1; }
    .dock h2 { font: 400 9px/12px Roboto, "Open Sans", sans-serif; margin: 0 18px 0 16px; }
    .dock .q { width: 13px; height: 13px; border: 1px solid #262626; border-radius: 2px; }
    .manip { justify-content: flex-end; gap: 2px; height: 23px; }
    .side .menus { height: 20px; padding: 0 8px; flex: none; }
    .channels { flex: 1; background: #2b2b2b; margin: 0 2px 0 1px; min-height: 60px; }
    .split { border-top: 1px solid #2b2b2b; margin: 2px 0 9px; }
    .side .layers { border: 1px solid #2b2b2b; height: 225px; margin: 0 1px 0 0; padding: 1px 4px 3px 3px; display: flex; flex-direction: column; flex: none; }
    .side .tab { padding-left: 11px; padding-right: 12px; }
    .layers .menus { padding: 0 6px; }
    .lay-tools { justify-content: flex-end; gap: 8px; height: 25px; padding-right: 1px; }
    .lay-tools .wide { margin-right: 4px; }
    .list { flex: 1; background: #2b2b2b; margin: 0; padding: 4px; color: #fff; }
    .cell { width: 9px; height: 14px; border: 1px solid #1c1c1c; border-radius: 2px; margin-right: 3px; font-size: 10px; line-height: 12px; }
    .swatch { width: 16px; height: 14px; background: #9c0026; margin-right: 3px; }
    .lname { width: 289px; overflow: hidden; white-space: nowrap; }
    .vtabs { display: flex; flex-direction: column; gap: 1px; }
    .vtab { writing-mode: vertical-rl; background: #373737; color: #999; height: 104px; width: 21px; padding-right: 3px; }
    .vtab.cur { background: #6b6b6b; color: #eee; height: 156px; }
    .time { padding-top: 3px; align-items: flex-start; }
    .track { display: flex; height: 28px; background: #2b2b2b; flex: 1; min-width: 0; margin-left: -1px; color: #7c7c7c; }
    .lead { width: 62px; flex: none; padding-left: 9px; }
    .now { width: 12px; height: 28px; background: #555; color: #fff; line-height: 16px; padding: 12px 0 0 2px; }
    .frame { flex: 1 1 0; min-width: 0; height: 28px; line-height: 12px; display: flex; flex-direction: column; justify-content: space-between; white-space: nowrap; }
    .frame.tail { flex: 0 0 20px; }
    .frame::after { content: ""; width: 2px; height: 15px; background: #8a8a8a; }
    .frame span { padding-left: 1px; }
    .cur-frame { width: 68px; height: 18px; margin: 6px 7px 0 7px; }
    .play { gap: 3px; padding: 4px 11px 0 0; }
    .f { width: 68px; height: 23px; flex: none; }
    .ranger { flex: 1; height: 23px; background: #373737; margin: 0 7px; padding: 2px 6px; min-width: 0; display: flex; }
    .bar { width: 61%; background: #5e5e5e; border-radius: 3px; display: flex; align-items: center; gap: 4px; padding: 0 4px; }
    .bar .fill { flex: 1; }
    .handle { appearance: none; width: 13px; height: 13px; padding: 0; background: none; margin: 0; }
    .handle::-webkit-slider-thumb { appearance: none; width: 13px; height: 13px; border-radius: 2px; background: #929292; }
    .drop { width: 22px; height: 20px; }
    .wide-box { width: 102px; height: 25px; line-height: 23px; }
    .cmd label { width: 45px; padding-left: 10px; color: #e2e2e2; flex: none; }
    .cmd-in { flex: 0 1 617px; height: 23px; }
    .cmd-out { flex: 1 1 0; height: 25px; margin: 0 6px 0 4px; border-radius: 0; }
    .cmd .bit { width: 1px; height: 25px; background: #2b2b2b; margin: 0 1px; }
    .help { border-top: 1px solid #2b2b2b; font-size: 9px; color: #c0c0c0; }
    .help .tip { padding-left: 10px; }
  `;

  private btn(name: string, cls = "t", size = 20) {
    return html`<button class=${classMap({ [cls]: true, on: ACTIVE.has(name), boxed: BOXED.has(name) })} aria-label=${name}>
      <maya-icon name=${name} size=${size}></maya-icon>
    </button>`;
  }

  private btns(names: string[], cls = "t", size = 20) {
    return names.map((n) => this.btn(n, cls, size));
  }

  private menus(items: string[], cls = "") {
    return html`<nav class="row menus ${cls}">${items.map((m) => html`<button>${m}</button>`)}</nav>`;
  }

  private logo(w: number, h: number, framed = false) {
    return html`<svg class="logo" width=${w} height=${h} viewBox="0 0 32 30" aria-hidden="true">
      ${framed ? svg`<path d="M-2 0h36v30H-2z" fill="#d8f3f3"/>` : ""}
      <path d="M0 9L16 0 32 9V29H25L25 19 16 29 7 19V29H0z" fill="#149a9c" />
      <path d="M0 9l7 5v15H0z" fill="#2deeee" /><path d="M32 9l-6 5v15h6z" fill="#178f92" />
      <path d="M7 9L16 0l-4 18-6 1z" fill="#0b5a5d" /><path d="M25 9L16 0l4 18 6 1z" fill="#0a6265" />
      <path d="M16 2l6 14-6 7-6-7z" fill="#128083" /><path d="M9 18l7 6 7-6-7 11z" fill="#2ad9da" />
    </svg>`;
  }

  private status() {
    const sep = html`<span class="sep"></span>`;
    const end = html`<span class="end"></span>`;
    return html`<div class="row status">
      <span class="vgrip"></span>
      <div class="combo mode">
        <select aria-label="Menu set"><option>Rigging</option></select>
        <maya-icon name="tri" size="12"></maya-icon>
      </div>
      ${sep}${this.btns(["file", "open", "save", "undo", "redo"])}${end}${sep}
      ${this.btns(["selHier", "selObj", "selComp"])}${end}${sep}
      ${this.btns(["magGrid", "magCurve", "magPoint", "magCenter", "magPlane", "magLive"])}
      <button class="outlined live">No Live Surface</button>
      ${sep}${this.btns(["inBox", "outBox", "history"])}${sep}
      ${this.btns(["rendView", "rend", "ipr", "rendSet", "hyper"])}${sep}
      &nbsp;&nbsp;${this.btn("target")}&nbsp;&nbsp;
      ${["X", "Y", "Z"].map((a) => html`<label for="c${a}">${a}:</label><input class="coord" id="c${a}" />`)}
      <span class="grow"></span>
      ${this.btns(["modelKit", "attr", "toolSet", "layers"])}&nbsp;
    </div>`;
  }

  private shelfBar() {
    return html`<div class="shelf">
      <span class="vgrip"></span>
      <div class="shelf-side"><span class="burger"></span><maya-icon name="gearS" size="12"></maya-icon></div>
      <div class="tabs">
        ${SHELVES.map((s) => html`<button class=${classMap({ tab: true, cur: s === this.shelf })} @click=${() => (this.shelf = s)}>${s}</button>`)}
      </div>
      <div class="shelf-body">
        ${this.btns(Object.keys(BIG), "s", 28)}
        <div class="spin"><span class="up"></span><span class="knob"></span><span class="down"></span></div>
      </div>
    </div>`;
  }

  private sidePanel() {
    return html`<section class="side">
      <header class="row dock">
        <span class="hgrip"></span><h2>Channel Box / Layer Editor</h2><span class="hgrip"></span>
        ${this.btns(["dock", "close"], "q", 11)}
      </header>
      <div class="row manip">${this.btns(["axes", "ball", "arrowRed"])}</div>
      ${this.menus(["Channels", "Edit", "Object", "Show"])}
      <div class="channels"></div>
      <div class="split"></div>
      <div class="tabs">
        ${["Display", "Render", "Anim"].map((t) => html`<button class=${classMap({ tab: true, cur: t === this.layerTab })} @click=${() => (this.layerTab = t)}>${t}</button>`)}
      </div>
      <div class="layers">
        ${this.menus(["Layers", "Options", "Help"])}
        <div class="row lay-tools">${this.btn("layUp", "t", 16)}${this.btn("layDown", "wide", 16)}${this.btns(["layAdd", "layNew"], "t", 16)}</div>
        <div class="list">
          <div class="row">
            <button class="cell">V</button><button class="cell">P</button><button class="cell" aria-label="type"></button>
            <button class="swatch" aria-label="colour"></button>
            <span class="lname">Mineral_Fiber_Ceiling_mb_standart:Mineral_Fiber_Ceiling</span>
          </div>
        </div>
      </div>
    </section>`;
  }

  render() {
    const frames = Array.from({ length: 24 }, (_, i) => (i + 1) * 5);
    return html`
      <header class="row title">
        ${this.logo(16, 16, true)}
        <h1 class="name">Autodesk Maya 2016: untitled*</h1>
        ${this.btns(["min", "restore", "shut"], "win")}
      </header>
      ${this.menus(MENUS, "main-menu")}
      ${this.status()}
      ${this.shelfBar()}
      <main class="work">
        <aside class="toolbox">
          <span class="hgrip"></span>
          ${this.btns(["select", "lasso", "paint", "move", "rotate", "scale"], "b", 36)}
          <span class="rule"></span>
          ${this.btns(["single", "four", "outliner", "graph", "hyperg", "combo"], "b", 36)}
          <button class="more" aria-label="More layouts"><maya-icon name="tri" size="6"></maya-icon></button>
          ${this.logo(32, 30)}
        </aside>
        <section class="view">
          ${this.menus(["View", "Shading", "Lighting", "Show", "Renderer", "Panels"])}
          <div class="row ptools">
            ${PANEL_GROUPS.map((g) => html`<span class="sep"></span>${this.btns(g, "t", 17)}`)}
            <span class="sep"></span>
            ${this.btn("aperture", "t", 17)}<input class="num" aria-label="Exposure" value="0.00" />
            ${this.btn("gamma", "t", 17)}<input class="num" aria-label="Gamma" value="1.00" />
            ${this.btn("on", "t", 19)}
            <div class="combo cm">
              <select aria-label="View transform"><option>sRGB gamma</option></select>
              <maya-icon name="tri" size="10"></maya-icon>
            </div>
          </div>
          <maya-scene></maya-scene>
        </section>
        ${this.sidePanel()}
        <div class="vtabs">
          <button class="vtab">Attribute Editor</button>
          <button class="vtab cur">Channel Box / Layer Editor</button>
        </div>
      </main>
      <div class="row time">
        <span class="vgrip"></span>
        <div class="track">
          <div class="lead"><div class="now">1</div></div>
          ${frames.map((f) => html`<div class=${classMap({ frame: true, tail: f === 120 })}><span>${f}</span></div>`)}
        </div>
        <input class="cur-frame" aria-label="Current frame" value="1" />
        <div class="row play">${this.btns(["first", "back", "prevKey", "playB", "play", "nextKey", "fwd", "last"], "p", 20)}</div>
      </div>
      <div class="row range">
        <span class="vgrip"></span>
        <input class="f" aria-label="Animation start" value="1" />&nbsp;&nbsp;&nbsp;
        <input class="f" aria-label="Playback start" value="1" />
        <div class="ranger">
          <div class="bar">
            <input class="handle" type="range" aria-label="Range start" /><span>1</span>
            <span class="fill"></span>
            <span>120</span><input class="handle" type="range" aria-label="Range end" />
          </div>
        </div>
        <input class="f" aria-label="Playback end" value="120" />&nbsp;&nbsp;&nbsp;
        <input class="f" aria-label="Animation end" value="200" />
        ${this.btn("triDark", "drop", 11)}<button class="outlined wide-box">No Anim Layer</button>
        &nbsp;&nbsp;${this.btn("triDark", "drop", 11)}<button class="outlined wide-box">No Character Set</button>
        &nbsp;&nbsp;${this.btn("autoKey", "t", 18)}&nbsp;&nbsp;&nbsp;&nbsp;${this.btn("prefs", "t", 19)}&nbsp;&nbsp;&nbsp;&nbsp;
      </div>
      <div class="row cmd">
        <span class="vgrip"></span>
        <label for="mel">MEL</label>
        <input class="cmd-in" id="mel" />
        <span class="bit"></span>
        <input class="cmd-out" aria-label="Command result" readonly />
        ${this.btn("script", "t", 18)}&nbsp;&nbsp;&nbsp;
      </div>
      <footer class="row help"><span class="vgrip"></span><span class="tip">Select Tool: select an object</span></footer>
    `;
  }
}
